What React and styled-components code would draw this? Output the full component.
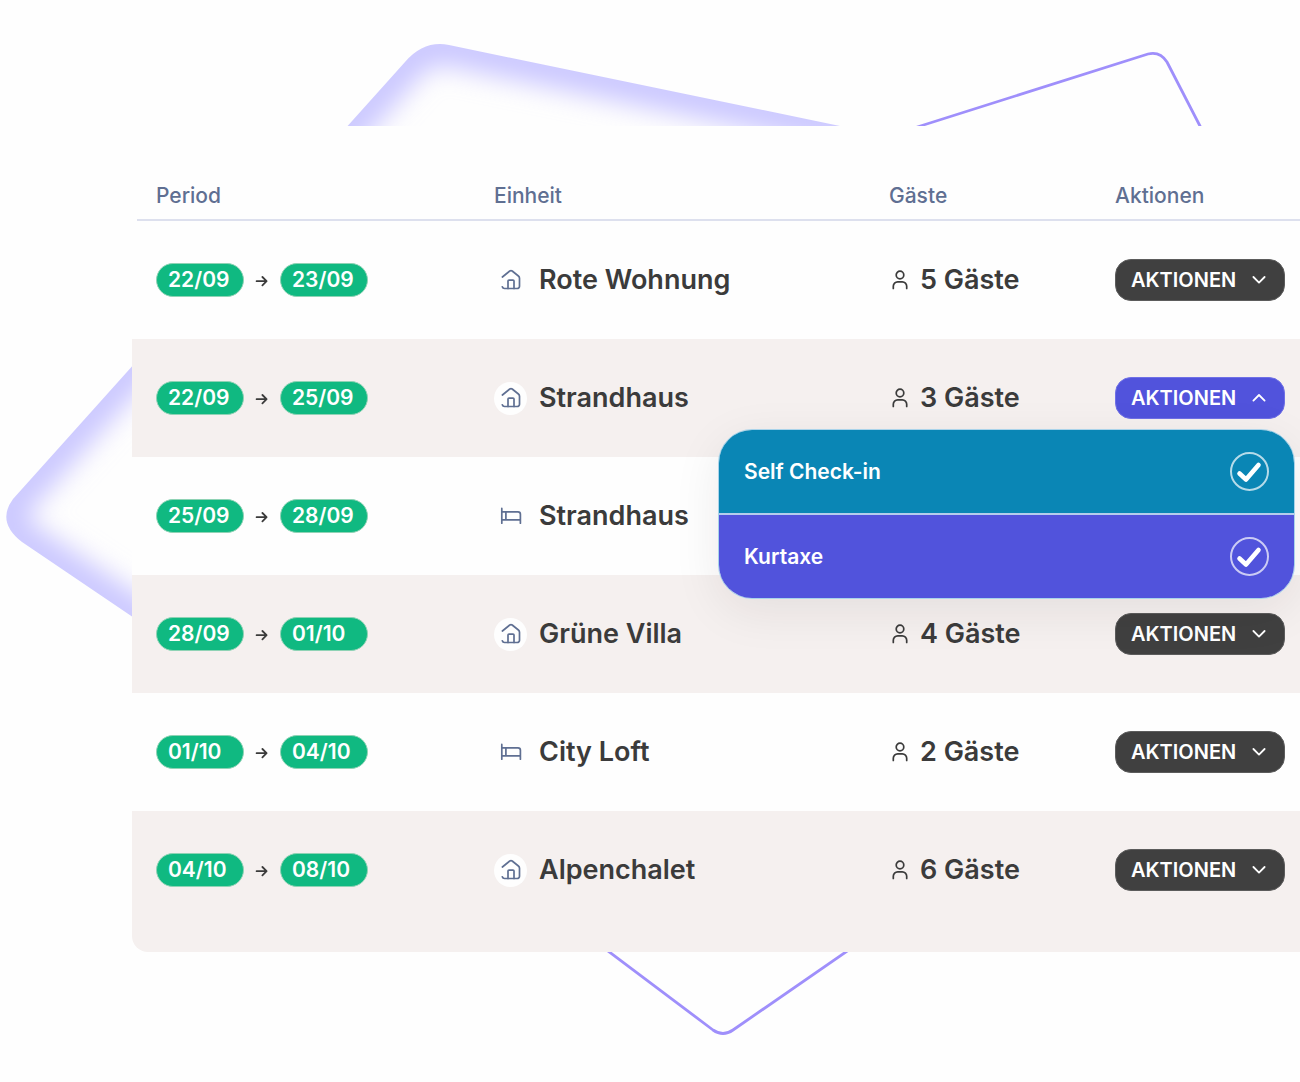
import React from "react";
import styled, { createGlobalStyle } from "styled-components";

const GlobalStyle = createGlobalStyle`
  *, *::before, *::after { box-sizing: border-box; }
  body {
    margin: 0;
    background: #fefefe;
    font-family: Inter, "Liberation Sans", sans-serif;
  }
`;

const Page = styled.main`
  position: relative;
  overflow: hidden;
  padding: 126px 0 130px 132px;
`;

const Backdrop = styled.svg`
  position: absolute;
  top: 0;
  left: 0;
`;

const Card = styled.section`
  position: relative;
  overflow: hidden;
  background: #fefefe;
  border-bottom-left-radius: 16px;
`;

const Table = styled.table`
  width: 100%;
  table-layout: fixed;
  border-collapse: collapse;
`;

const Column = styled.col`
  width: ${(p) => (p.$width ? `${p.$width}px` : "auto")};
`;

const HeadRow = styled.tr`
  height: 95px;
  background: linear-gradient(#dde0ee, #dde0ee) 5px 100% / 100% 2px no-repeat;
`;

const HeadCell = styled.th`
  padding: 45px 0 0;
  vertical-align: top;
  text-align: left;
  font-size: 21px;
  line-height: 50px;
  font-weight: 500;
  color: #5f6f92;

  &:first-child { padding-left: 24px; }
`;

const Row = styled.tr`
  height: 118px;
  background: ${(p) => (p.$tinted ? "#f5f0ef" : "#fefefe")};

  &:last-child td { padding-bottom: 23px; }
  &:last-child { height: 141px; }
`;

const Cell = styled.td`
  padding: 0;
  vertical-align: middle;

  &:first-child { padding-left: 24px; }
`;

const Period = styled.div`
  display: flex;
  align-items: center;
  gap: 10px;
  color: #3b3b3b;
`;

const DatePill = styled.time`
  width: 88px;
  height: 34px;
  padding-left: 11px;
  border: 1px solid #8fd3b5;
  border-radius: 17px;
  background: #10b981;
  color: #fff;
  font-size: 21px;
  line-height: 32px;
  font-weight: 600;
`;

const Labelled = styled.div`
  display: flex;
  align-items: center;
  gap: ${(p) => p.$gap}px;
  font-size: 27px;
  line-height: 34px;
  font-weight: 600;
  color: #3b3b3b;
  white-space: nowrap;
`;

const IconBubble = styled.span`
  display: grid;
  place-items: center;
  width: 33px;
  height: 33px;
  border-radius: 50%;
  background: #fefefe;
  color: #5f6f92;
`;

const Actions = styled.div`
  position: relative;
  width: 170px;
`;

const ActionButton = styled.button`
  display: flex;
  align-items: center;
  justify-content: space-between;
  width: 100%;
  height: 42px;
  padding: 0 16px 0 15px;
  border: 1px solid ${(p) => (p.$open ? "#6f70e6" : "#5c5c5c")};
  border-radius: 16px;
  background: ${(p) => (p.$open ? "#5153dc" : "#404040")};
  color: #fff;
  font: inherit;
  font-size: 20px;
  font-weight: 600;
  cursor: pointer;
`;

const Menu = styled.div`
  position: absolute;
  z-index: 2;
  top: calc(100% + 10px);
  right: -10px;
  width: 577px;
  overflow: hidden;
  border: 1px solid #a9d3ea;
  border-radius: 34px;
  box-shadow: 0 12px 48px rgba(40, 30, 30, 0.08);
`;

const MenuItem = styled.label`
  display: flex;
  align-items: center;
  justify-content: space-between;
  height: 83px;
  padding: 0 25px;
  background: ${(p) => p.$color};
  color: #fff;
  font-size: 21px;
  font-weight: 600;
  cursor: pointer;

  & + & {
    height: 85px;
    border-top: 2px solid #b5cdec;
  }
`;

const Tick = styled.span`
  display: grid;
  place-items: center;

  > * { grid-area: 1 / 1; }
  > svg { pointer-events: none; visibility: hidden; }
  > input:checked + svg { visibility: visible; }
`;

const TickInput = styled.input`
  appearance: none;
  width: 39px;
  height: 39px;
  margin: 0;
  border: 2px solid rgba(255, 255, 255, 0.7);
  border-radius: 50%;
`;

const Stroke = ({ size, width = 1.6, children }) => (
  <svg
    width={size}
    height={size}
    viewBox={`0 0 ${size} ${size}`}
    fill="none"
    stroke="currentColor"
    strokeWidth={width}
    strokeLinecap="round"
    strokeLinejoin="round"
    aria-hidden="true"
  >
    {children}
  </svg>
);

const HouseIcon = () => (
  <Stroke size={24} width={1.7}>
    <path d="M3.4 9 10.8 3a1.9 1.9 0 0 1 2.4 0l6.2 5a2.9 2.9 0 0 1 1.1 2.3v7.9a2.3 2.3 0 0 1-2.3 2.3H5.5a2.3 2.3 0 0 1-2.2-1.7" />
    <path d="M9 20.5v-7.4a1 1 0 0 1 1-1h4a1 1 0 0 1 1 1v7.4" />
  </Stroke>
);

const BedIcon = () => (
  <Stroke size={24} width={1.7}>
    <path d="M2.8 4.4v14.8M2.8 7.8H19a2.4 2.4 0 0 1 2.4 2.4v9M2.8 15.8h18.6M6.9 7.8v8" />
  </Stroke>
);

const UserIcon = () => (
  <Stroke size={22} width={1.7}>
    <circle cx="11" cy="6" r="3.8" />
    <path d="M4.3 19.4v-2.2a4.4 4.4 0 0 1 4.4-4.4h4.6a4.4 4.4 0 0 1 4.4 4.4v2.2" />
  </Stroke>
);

const ArrowIcon = () => (
  <Stroke size={16} width={1.8}>
    <path d="M2.6 9.2h9.8M8.4 5l4.2 4.2-4.2 4.2" />
  </Stroke>
);

const Chevron = ({ up }) => (
  <Stroke size={18} width={1.8}>
    <path d={up ? "M3.4 11.6 9 6l5.600 5.600" : "M3.4 6 9 11.600 14.600 6"} />
  </Stroke>
);

const CheckIcon = () => (
  <Stroke size={39} width={4.6}>
    <path d="M9.5 21.5 16 27.5 28.5 13" />
  </Stroke>
);

const Shapes = () => {
  const glow =
    "M13 499 405 62Q424 40 449 45L840 126 1100 180 900 620 400 798 22 542Q-4 522 13 499Z";
  return (
    <Backdrop width="1300" height="1082" viewBox="0 0 1300 1082" fill="none" aria-hidden="true">
      <defs>
        <clipPath id="glow-clip">
          <path d={glow} />
        </clipPath>
        <filter id="glow-blur" x="-10%" y="-10%" width="120%" height="120%">
          <feGaussianBlur stdDeviation="13" />
        </filter>
      </defs>
      <g clipPath="url(#glow-clip)">
        <path d={glow} stroke="#cbc8ff" strokeWidth="42" filter="url(#glow-blur)" />
      </g>
      <path
        d="M713 1030 300 719 560 240 1148 54Q1160 51 1167 62L1300 320 1080 790 733 1030Q723 1037 713 1030Z"
        stroke="#9f8ffb"
        strokeWidth="2.8"
      />
    </Backdrop>
  );
};

const rows = [
  { from: "22/09", to: "23/09", unit: "Rote Wohnung", guests: 5, icon: "house" },
  { from: "22/09", to: "25/09", unit: "Strandhaus", guests: 3, icon: "house", open: true },
  { from: "25/09", to: "28/09", unit: "Strandhaus", icon: "bed" },
  { from: "28/09", to: "01/10", unit: "Grüne Villa", guests: 4, icon: "house" },
  { from: "01/10", to: "04/10", unit: "City Loft", guests: 2, icon: "bed" },
  { from: "04/10", to: "08/10", unit: "Alpenchalet", guests: 6, icon: "house" },
];

const options = [
  { label: "Self Check-in", color: "#0a86b5" },
  { label: "Kurtaxe", color: "#5153dc" },
];

const ActionMenu = () => (
  <Menu>
    {options.map((option) => (
      <MenuItem key={option.label} $color={option.color}>
        {option.label}
        <Tick>
          <TickInput type="checkbox" defaultChecked />
          <CheckIcon />
        </Tick>
      </MenuItem>
    ))}
  </Menu>
);

export default function App() {
  return (
    <>
      <GlobalStyle />
      <Page>
        <Shapes />
        <Card>
          <Table>
            <colgroup>
              <Column $width={362} />
              <Column $width={395} />
              <Column $width={226} />
              <Column />
            </colgroup>
            <thead>
              <HeadRow>
                <HeadCell scope="col">Period</HeadCell>
                <HeadCell scope="col">Einheit</HeadCell>
                <HeadCell scope="col">Gäste</HeadCell>
                <HeadCell scope="col">Aktionen</HeadCell>
              </HeadRow>
            </thead>
            <tbody>
              {rows.map((row, index) => (
                <Row key={row.from + row.to} $tinted={index % 2 === 1}>
                  <Cell>
                    <Period>
                      <DatePill>{row.from}</DatePill>
                      <ArrowIcon />
                      <DatePill>{row.to}</DatePill>
                    </Period>
                  </Cell>
                  <Cell>
                    <Labelled $gap={12}>
                      <IconBubble>{row.icon === "bed" ? <BedIcon /> : <HouseIcon />}</IconBubble>
                      {row.unit}
                    </Labelled>
                  </Cell>
                  <Cell>
                    {row.guests && (
                      <Labelled $gap={9}>
                        <UserIcon />
                        {row.guests} Gäste
                      </Labelled>
                    )}
                  </Cell>
                  <Cell>
                    {row.guests && (
                      <Actions>
                        <ActionButton type="button" $open={row.open} aria-expanded={!!row.open}>
                          AKTIONEN
                          <Chevron up={row.open} />
                        </ActionButton>
                        {row.open && <ActionMenu />}
                      </Actions>
                    )}
                  </Cell>
                </Row>
              ))}
            </tbody>
          </Table>
        </Card>
      </Page>
    </>
  );
}
